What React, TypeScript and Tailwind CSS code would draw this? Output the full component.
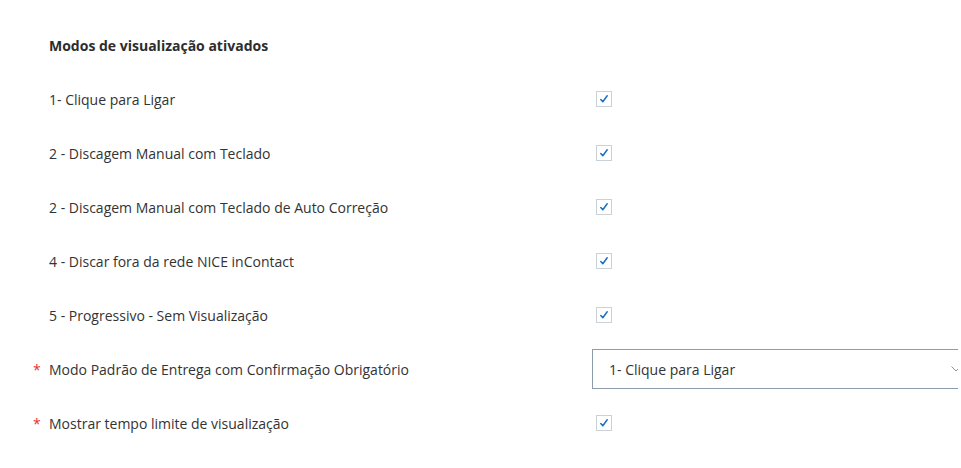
import React from "react";

const rows: { label: string; required?: boolean; type: "check" | "select" }[] = [
  { label: "1- Clique para Ligar", type: "check" },
  { label: "2 - Discagem Manual com Teclado", type: "check" },
  { label: "2 - Discagem Manual com Teclado de Auto Correção", type: "check" },
  { label: "4 - Discar fora da rede NICE inContact", type: "check" },
  { label: "5 - Progressivo - Sem Visualização", type: "check" },
  { label: "Modo Padrão de Entrega com Confirmação Obrigatório", required: true, type: "select" },
  { label: "Mostrar tempo limite de visualização", required: true, type: "check" },
];

function Check() {
  return (
    <div className="ml-[4px] shrink-0 w-[16px] h-[16px] border border-[#c9d1d9] bg-white flex items-center justify-center">
      <svg width="10" height="10" viewBox="0 0 10 10">
        <path d="M1.8 5.6 L3.8 7.8 L8.2 1.8" fill="none" stroke="#1b6fc2" strokeWidth="1.5" strokeLinecap="round" strokeLinejoin="round" />
      </svg>
    </div>
  );
}

function Select() {
  return (
    <div className="shrink-0 w-[390px] h-[40px] border border-[#8d9cad] bg-white flex items-center justify-between pl-[16px] pr-[20px] text-[14px] text-[#333]">
      <span>1- Clique para Ligar</span>
      <svg width="10" height="6" viewBox="0 0 10 6">
        <path d="M0.5 0.5 L5 5 L9.5 0.5" fill="none" stroke="#8a94a0" strokeWidth="1" />
      </svg>
    </div>
  );
}

export default function App() {
  return (
    <div className="w-[961px] h-[468px] bg-white overflow-hidden">
      <div className="w-[958px] h-[468px] overflow-hidden pt-[18px] text-[#333]" style={{ fontFamily: '"Open Sans", sans-serif' }}>
        <div className="h-[54px] flex items-center pl-[49px] text-[14px] font-bold text-[#2d2d2d]">
          Modos de visualização ativados
        </div>
        {rows.map((r) => (
          <div key={r.label} className="h-[54px] flex items-center pl-[33px]">
            <span className="shrink-0 w-[16px] text-[#e8312f] text-[14px]">{r.required ? "*" : ""}</span>
            <span className="shrink-0 w-[543px] text-[14px] text-[#333]">{r.label}</span>
            {r.type === "check" ? <Check /> : <Select />}
          </div>
        ))}
      </div>
    </div>
  );
}
